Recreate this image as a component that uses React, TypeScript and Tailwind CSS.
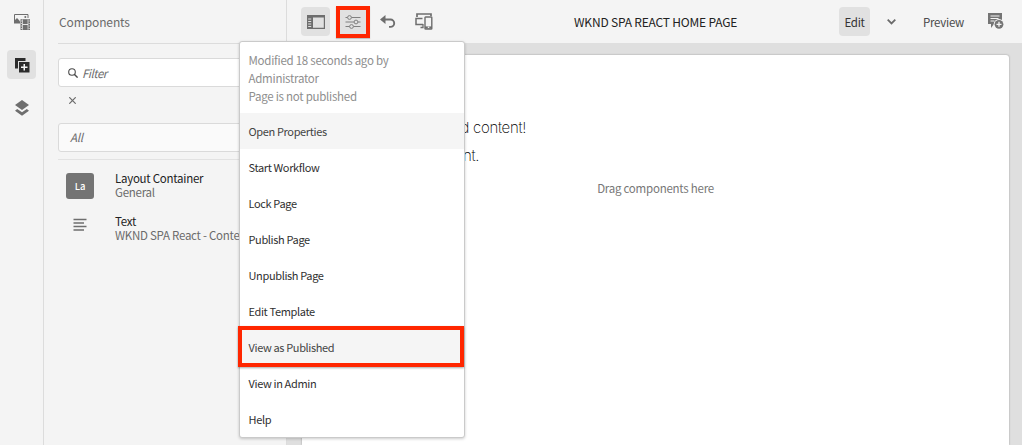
import type { ReactNode } from "react";

const menuItems = [
  "Open Properties",
  "Start Workflow",
  "Lock Page",
  "Publish Page",
  "Unpublish Page",
  "Edit Template",
  "View as Published",
  "View in Admin",
  "Help",
];

function AssetsIcon() {
  return (
    <svg width="16" height="16" viewBox="0 0 16 16">
      <path d="M.5 9V.5h13.500V4" fill="none" stroke="#6e6e6e" />
      <circle cx="11.300" cy="3" r="1" fill="#6e6e6e" />
      <path d="M0 9.500V7l3-3 3 3.300v2.200z" fill="#6e6e6e" />
      <path d="M6.500 5.200H16V16H6.500z" fill="#6e6e6e" />
      <path d="M8.500 5.500v10.200M14 5.500v10.200" stroke="#f4f4f4" strokeWidth=".7" />
      <path d="M8.500 10.500H14" stroke="#f4f4f4" strokeWidth=".9" />
      <path d="M7.400 6.500v9M15.200 6.500v9" stroke="#f4f4f4" strokeWidth=".8" strokeDasharray="1 1.500" />
    </svg>
  );
}

function ComponentsIcon() {
  return (
    <svg width="16" height="16" viewBox="0 0 16 16">
      <path d="M1 1h10.500v3H4v7.500H1z" fill="#2c2c2c" />
      <path d="M4.200 4.200h11.300v11.300H4.200z" fill="#e1e1e1" />
      <path d="M5 5h10.500v10.500H5z" fill="#2c2c2c" />
      <path d="M10.250 7v6.500M7 10.250h6.500" stroke="#f4f4f4" strokeWidth="1.500" />
    </svg>
  );
}

function LayersIcon() {
  return (
    <svg width="16" height="16" viewBox="0 0 16 16" fill="#6e6e6e">
      <path d="M8 0l7 5-7 5-7-5z" />
      <path d="M3.200 9L8 12.300 12.800 9l2.200 1.700-7 5-7-5z" />
    </svg>
  );
}

function SidePanelIcon() {
  return (
    <svg width="18" height="14" viewBox="0 0 18 14">
      <path fillRule="evenodd" d="M0 0h18v14H0zM6 2.500v10.300h10.800V2.500z" fill="#6e6e6e" />
      <path d="M1.200 4h3M1.200 6.500h3M1.200 9h3M1.200 11.500h3" stroke="#e1e1e1" strokeWidth="1" />
    </svg>
  );
}

function SlidersIcon() {
  return (
    <svg width="16" height="14" viewBox="0 0 16 14" fill="none" stroke="#808080" strokeWidth="1">
      <path d="M.5 2.500h2M6.500 2.500h9M.5 7h8.500M13 7h2.500M.5 11.500h4M8.500 11.500h7" />
      <circle cx="4.500" cy="2.500" r="1.900" />
      <circle cx="11" cy="7" r="1.900" />
      <circle cx="6.500" cy="11.500" r="1.900" />
    </svg>
  );
}

function UndoIcon() {
  return (
    <svg width="16" height="14" viewBox="0 0 16 14">
      <path d="M0 4.500L5.500 0v9z" fill="#6e6e6e" />
      <path d="M4 4.500h6.500a3.700 3.700 0 0 1 0 7.400H9" fill="none" stroke="#6e6e6e" strokeWidth="1.900" />
    </svg>
  );
}

function DevicesIcon() {
  return (
    <svg width="18" height="17" viewBox="0 0 18 17" fill="none" stroke="#6e6e6e">
      <path d="M2 4V1h14v2" strokeWidth="1.700" />
      <path d="M8 11.500H1V5.500h6.500" strokeWidth="1.500" />
      <path d="M5.500 14.500H8V11" strokeWidth="1.300" />
      <rect x="10" y="4" width="6.800" height="12" rx=".6" strokeWidth="1.400" />
      <path d="M10 14.500h7" strokeWidth="2.200" />
      <path d="M12.800 14.300h1.500" stroke="#f4f4f4" strokeWidth="1.300" />
    </svg>
  );
}

function AnnotateIcon() {
  return (
    <svg width="16" height="17" viewBox="0 0 16 17">
      <path d="M0 0h14v9H8v2H6l-3 4v-4H0z" fill="#747474" />
      <path d="M2.500 3h9M2.500 5.500h8M2.500 8h4" stroke="#f4f4f4" strokeWidth="1" />
      <circle cx="11" cy="11.300" r="5.300" fill="#f4f4f4" />
      <circle cx="11" cy="11.300" r="4.400" fill="#747474" />
      <path d="M11 8.800v5M8.500 11.300h5" stroke="#f4f4f4" strokeWidth="1.300" />
    </svg>
  );
}

function RailButton({ active, children }: { active?: boolean; children: ReactNode }) {
  return (
    <button className={`flex size-[29px] items-center justify-center rounded-[4px] ${active ? "bg-[#e1e1e1]" : ""}`}>
      {children}
    </button>
  );
}

function Sidebar() {
  return (
    <aside className="flex h-full w-[287px] shrink-0 border-r border-[#dcdcdc]">
      <nav className="flex w-[44px] shrink-0 flex-col items-center gap-[14px] border-r border-[#dcdcdc] pt-[7px]">
        <RailButton><AssetsIcon /></RailButton>
        <RailButton active><ComponentsIcon /></RailButton>
        <RailButton><LayersIcon /></RailButton>
      </nav>
      <div className="flex min-w-0 flex-1 flex-col pl-[14px]">
        <h2 className="flex h-[44px] items-center border-b border-[#dcdcdc] pl-px text-[12px] leading-5 tracking-[-0.12px] text-[#6b6b6b]">Components</h2>
        <div className="mt-[14px] flex h-[29px] shrink-0 items-center rounded-l-[3px] border border-[#dadada] bg-white pl-[9px]">
          <svg width="10" height="10" viewBox="0 0 10 10" fill="none" stroke="#4b4b4b" strokeWidth="1.100">
            <circle cx="4" cy="4" r="3.300" />
            <path d="M6.500 6.500L9.600 9.600" strokeWidth="1.400" />
          </svg>
          <span className="pl-[4px] text-[11.5px] italic leading-5 tracking-[-0.5px] text-[#6e6e6e]">Filter</span>
        </div>
        <svg className="ml-[11px] mt-[10px] shrink-0" width="7" height="7" viewBox="0 0 7 7" stroke="#6b6b6b" strokeWidth="1.200">
          <path d="M.3.3l6.400 6.400M6.700.3L.3 6.700" />
        </svg>
        <div className="mt-[19px] flex h-[29px] shrink-0 items-center rounded-l-[3px] border border-[#dadada] bg-[#fafafa] pb-px pl-[11px] text-[11.5px] italic leading-5 tracking-[-0.3px] text-[#6e6e6e]">All</div>
        <div className="mt-[7px] flex flex-col border-t border-[#e2e2e2] pt-[11px]">
          <div className="flex h-[43px] items-start">
            <div className="ml-2 mt-[2px] flex h-[26px] w-[28px] shrink-0 items-center justify-center rounded-[3px] bg-[#747474] text-[9.5px] font-medium leading-4 tracking-[-0.2px] text-white">La</div>
            <div className="ml-[21px] whitespace-nowrap text-[11.5px] leading-[14px] tracking-[-0.26px]">
              <div className="text-[#222]">Layout Container</div>
              <div className="text-[#6b6b6b]">General</div>
            </div>
          </div>
          <div className="flex items-start">
            <svg className="ml-[15px] mt-[4px] shrink-0" width="14" height="14" viewBox="0 0 14 14" stroke="#6e6e6e" strokeWidth="1.300">
              <path d="M.5 1.500h13M.5 5h10.500M.5 8.500h13M.5 12h10.500" />
            </svg>
            <div className="ml-[28px] whitespace-nowrap text-[11.5px] leading-[14px] tracking-[-0.26px]">
              <div className="text-[#222]">Text</div>
              <div className="text-[#6b6b6b]">WKND SPA React - Conte</div>
            </div>
          </div>
        </div>
      </div>
    </aside>
  );
}

function Toolbar() {
  return (
    <header className="flex h-[43px] shrink-0 items-center">
      <div className="flex w-[287px] shrink-0 items-center pl-[14px]">
        <button className="flex size-[29px] items-center justify-center rounded-[4px] bg-[#e1e1e1]"><SidePanelIcon /></button>
        <button className="ml-[6px] flex h-8 w-[34px] items-center justify-center border-4 border-[#ff2600] bg-[#e1e1e1] shadow-[0_1px_1px_rgba(0,0,0,0.2)]"><SlidersIcon /></button>
        <button className="ml-[10px]"><UndoIcon /></button>
        <button className="ml-[19px]"><DevicesIcon /></button>
      </div>
      <h1 className="w-[164px] whitespace-nowrap text-[12px] leading-5 tracking-[-0.19px] text-[#222]">WKND SPA REACT HOME PAGE</h1>
      <div className="ml-auto flex items-center text-[11.5px] leading-5 tracking-[-0.26px] text-[#4b4b4b]">
        <button className="flex h-[29px] w-[31px] items-center justify-center rounded-[4px] bg-[#e1e1e1] pt-px tracking-[-0.3px] text-[#333]">Edit</button>
        <svg className="ml-[17px]" width="9" height="6" viewBox="0 0 9 6" fill="none" stroke="#6b6b6b" strokeWidth="1.800">
          <path d="M.7.700l3.800 3.800L8.300.700" />
        </svg>
        <button className="ml-[27px] w-[42px] whitespace-nowrap pt-px text-left">Preview</button>
        <span className="ml-[23px] mr-[18px]"><AnnotateIcon /></span>
      </div>
    </header>
  );
}

function PageMenu() {
  return (
    <div className="absolute left-[239px] top-[41px] w-[226px] rounded-[3px] border border-[#cacaca] bg-white text-[11px] leading-[18px] tracking-[-0.36px] shadow-[0_1px_3px_rgba(0,0,0,0.2)]">
      <div className="h-[72px] whitespace-nowrap pl-[8.500px] pt-[9px] text-[11.5px] tracking-[-0.26px] text-[#8e8e8e]">
        <div>Modified 18 seconds ago by</div>
        <div>Administrator</div>
        <div>Page is not published</div>
      </div>
      <ul className="-mt-px">
        {menuItems.map((item, i) => (
          <li key={item} className={`flex h-9 items-center pl-[8.500px] ${i === 0 || i === 6 ? "bg-[#f5f5f5] text-[#444]" : "text-[#303030]"}`}>
            {item}
          </li>
        ))}
      </ul>
      <div className="absolute left-[-2px] top-[284px] h-[41px] w-[226px] border-4 border-[#ff2600] shadow-[0_1px_2px_rgba(0,0,0,0.35)]" />
    </div>
  );
}

export default function App() {
  return (
    <div className="relative flex h-[445px] w-[1022px] overflow-hidden bg-[#f4f4f4] font-['Noto_Sans_CJK_SC','Open_Sans',sans-serif]">
      <Sidebar />
      <div className="flex min-w-0 flex-1 flex-col">
        <Toolbar />
        <main className="flex min-h-0 flex-1 bg-[#dfdfdf] pl-[15px] pr-[13px] pt-[12px]">
          <div className="flex flex-1 flex-col rounded-t-[3px] bg-white pt-[59px] shadow-[0_0_2px_rgba(0,0,0,0.35)]">
            <p className="w-[224px] text-right font-['Inter','Liberation_Sans',sans-serif] text-[15px] font-extralight leading-7 tracking-[-0.3px] text-black">d content!</p>
            <p className="w-[177px] text-right font-['Inter','Liberation_Sans',sans-serif] text-[15px] font-extralight leading-7 tracking-[-0.3px] text-black">nt.</p>
            <p className="mt-[8px] text-center text-[11.5px] leading-5 tracking-[-0.24px] text-[#777]">Drag components here</p>
          </div>
        </main>
      </div>
      <PageMenu />
    </div>
  );
}
